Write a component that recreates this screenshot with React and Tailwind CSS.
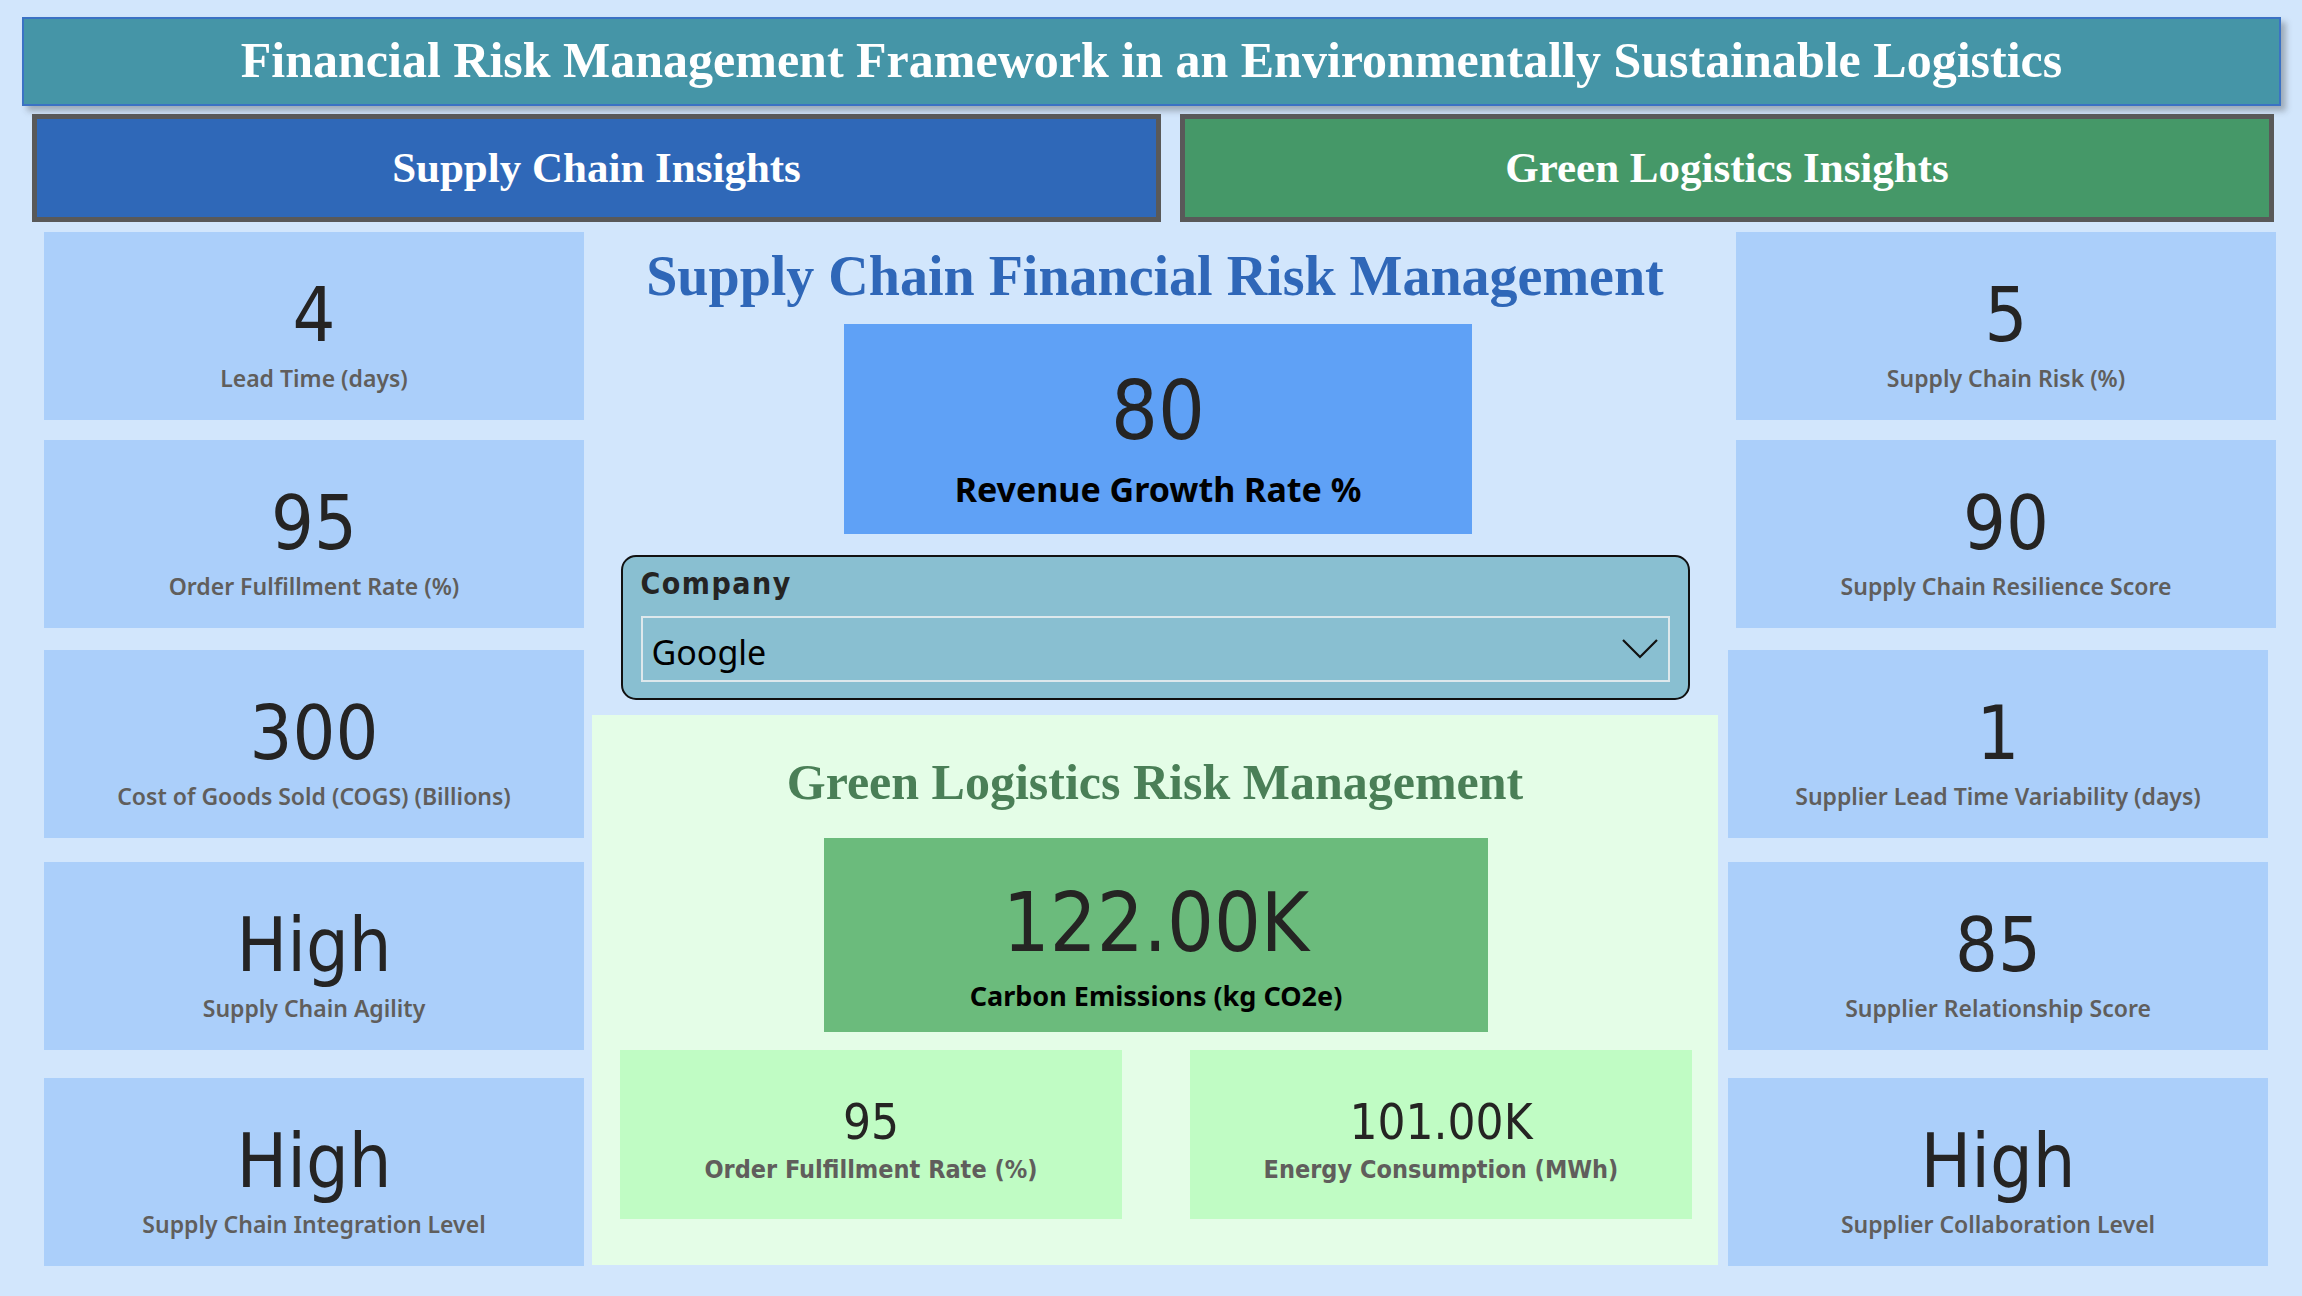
import React from "react";

const serif = "font-['Liberation_Serif','Times_New_Roman',serif]";
const numFont = "font-['DejaVu_Sans_Condensed','DejaVu_Sans',sans-serif] font-stretch-condensed";
const labelFont = "font-['Noto_Sans','Open_Sans',sans-serif]";

const leftCards = [
  { value: "4", label: "Lead Time (days)", mt: "mt-0" },
  { value: "95", label: "Order Fulfillment Rate (%)", mt: "mt-[20px]" },
  { value: "300", label: "Cost of Goods Sold (COGS) (Billions)", mt: "mt-[22px]" },
  { value: "High", label: "Supply Chain Agility", mt: "mt-[24px]" },
  { value: "High", label: "Supply Chain Integration Level", mt: "mt-[28px]" },
];

const rightCards = [
  { value: "5", label: "Supply Chain Risk (%)", mt: "mt-0 ml-[8px]" },
  { value: "90", label: "Supply Chain Resilience Score", mt: "mt-[20px] ml-[8px]" },
  { value: "1", label: "Supplier Lead Time Variability (days)", mt: "mt-[22px]" },
  { value: "85", label: "Supplier Relationship Score", mt: "mt-[24px]" },
  { value: "High", label: "Supplier Collaboration Level", mt: "mt-[28px]" },
];

function Card({ value, label, mt }) {
  return (
    <div className={`h-[188px] w-[540px] bg-[#abcffa] flex flex-col items-center ${mt}`}>
      <div className={`pt-[46px] text-[75px] leading-none text-[#252423] ${numFont}`}>{value}</div>
      <div className={`mt-[14px] text-[23px] leading-none font-semibold text-[#605e5c] ${labelFont}`}>{label}</div>
    </div>
  );
}

function SmallGreen({ value, label }) {
  return (
    <div className="h-[169px] w-[502px] bg-[#c0fcc4] flex flex-col items-center">
      <div className={`pt-[48px] text-[49px] leading-none text-[#252423] ${numFont}`}>{value}</div>
      <div className={`mt-[10px] text-[25px] leading-none font-semibold text-[#605e5c] ${numFont}`}>{label}</div>
    </div>
  );
}

export default function App() {
  return (
    <div className="w-[2302px] h-[1296px] bg-[#d2e6fc] overflow-hidden">
      {/* title */}
      <div className="ml-[22px] pt-[17px]">
        <div className="w-[2259px] h-[89px] bg-[#4595a7] border-2 border-[#3b72c4] shadow-[5px_5px_6px_rgba(60,60,60,0.35)] flex items-center justify-center pb-[4px]">
          <h1 className={`text-[50px] leading-none font-bold text-white ${serif}`}>
            Financial Risk Management Framework in an Environmentally Sustainable Logistics
          </h1>
        </div>
      </div>

      {/* tabs */}
      <div className="flex mt-[8px] ml-[32px] gap-[19px]">
        <div className="w-[1129px] h-[108px] bg-[#2f68b8] border-[5px] border-[#595959] flex items-center justify-center pb-[2px]">
          <span className={`text-[43px] leading-none font-bold text-white ${serif}`}>Supply Chain Insights</span>
        </div>
        <div className="w-[1094px] h-[108px] bg-[#459868] border-[5px] border-[#595959] flex items-center justify-center pb-[2px]">
          <span className={`text-[43px] leading-none font-bold text-white ${serif}`}>Green Logistics Insights</span>
        </div>
      </div>

      {/* main */}
      <div className="flex mt-[10px] ml-[44px]">
        <div className="w-[540px] flex flex-col">
          {leftCards.map((c, i) => (
            <Card key={i} {...c} />
          ))}
        </div>

        <div className="ml-[8px] w-[1126px] flex flex-col items-center">
          <h2 className={`mt-[16px] text-[56px] leading-none font-bold text-[#2f67b8] ${serif}`}>
            Supply Chain Financial Risk Management
          </h2>
          <div className="mt-[20px] ml-[6px] w-[628px] h-[210px] bg-[#5fa1f6] flex flex-col items-center">
            <div className={`pt-[46px] text-[82px] leading-none text-[#252423] ${numFont}`}>80</div>
            <div className={`mt-[20px] text-[34px] leading-none font-bold text-black ${labelFont}`}>Revenue Growth Rate %</div>
          </div>

          <div className="mt-[21px] w-[1069px] h-[145px] bg-[#89bfd1] border-2 border-[#111] rounded-[15px] px-[18px] pt-[12px]">
            <div className={`text-[30px] leading-none font-bold tracking-[1.5px] text-[#252423] ${numFont}`}>Company</div>
            <div className="mt-[17px] h-[66px] border-2 border-[#dde8ec] flex items-center justify-between pl-[9px] pr-[10px]">
              <span className={`mt-[6px] text-[34px] leading-none text-black ${labelFont}`}>Google</span>
              <svg width="36" height="20" viewBox="0 0 36 20" fill="none">
                <path d="M1 1 L18 18 L35 1" stroke="#111" strokeWidth="2.2" />
              </svg>
            </div>
          </div>

          <div className="mt-[15px] w-[1126px] h-[550px] bg-[#e4fde7] flex flex-col items-center">
            <h2 className={`mt-[42px] text-[50px] leading-none font-bold text-[#4a7f57] ${serif}`}>
              Green Logistics Risk Management
            </h2>
            <div className="mt-[31px] ml-[2px] w-[664px] h-[194px] bg-[#6bbb7c] flex flex-col items-center">
              <div className={`pt-[44px] text-[82px] leading-none text-[#252423] ${numFont}`}>122.00K</div>
              <div className={`mt-[18px] text-[27px] leading-none font-bold text-black ${labelFont}`}>Carbon Emissions (kg CO2e)</div>
            </div>
            <div className="mt-[18px] w-[1126px] flex pl-[28px] gap-[68px]">
              <SmallGreen value="95" label="Order Fulfillment Rate (%)" />
              <SmallGreen value="101.00K" label="Energy Consumption (MWh)" />
            </div>
          </div>
        </div>

        <div className="ml-[10px] w-[548px] flex flex-col">
          {rightCards.map((c, i) => (
            <Card key={i} {...c} />
          ))}
        </div>
      </div>
    </div>
  );
}
